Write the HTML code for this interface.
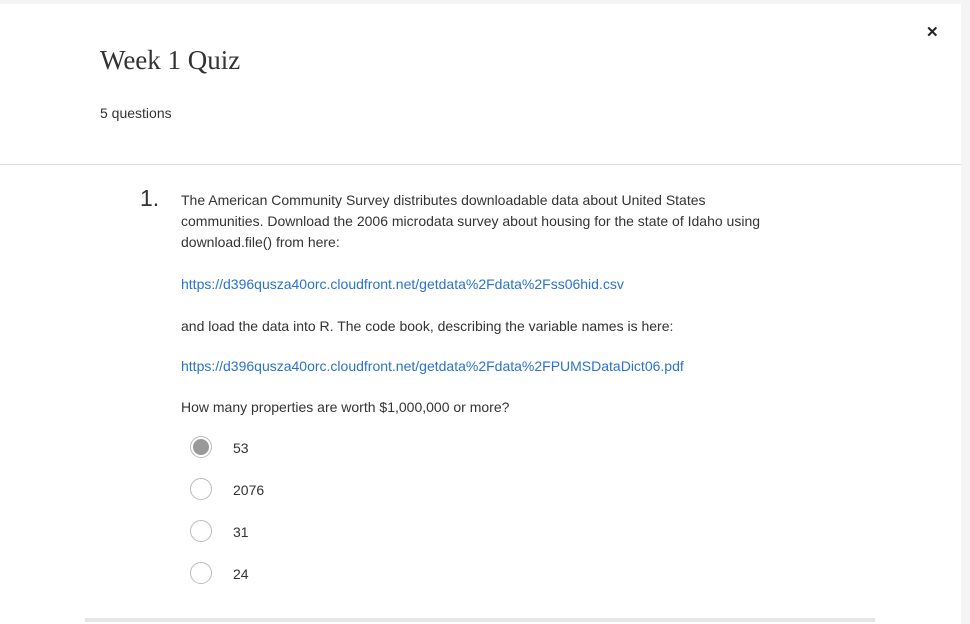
<!DOCTYPE html>
<html><head><meta charset="utf-8"><style>
body{margin:0;width:970px;height:624px;background:#f4f4f4;font-family:"Liberation Sans",sans-serif;overflow:hidden;position:relative}
.panel{position:absolute;left:0;top:4px;width:961px;height:620px;background:#fff}
.title{position:absolute;left:100px;top:41px;font-family:"Liberation Serif",serif;font-size:27px;color:#333}
.sub{position:absolute;left:100px;top:101px;font-size:14px;color:#333}
.close{position:absolute;left:926px;top:19px;font-size:15px;font-weight:bold;color:#222}
.hr{position:absolute;left:0;top:160px;width:961px;height:1px;background:#ddd}
.num{position:absolute;left:140px;top:181px;font-size:23px;color:#333}
.q{position:absolute;left:181px;width:700px;font-size:14px;color:#333;line-height:21px;white-space:nowrap}
a{color:#2a73cc;text-decoration:none}
.r{position:absolute;left:190px;width:22px;height:22px;border-radius:50%;border:1px solid #bbb;box-sizing:border-box;background:#fff}
.r.s::after{content:"";position:absolute;left:2px;top:2px;width:16px;height:16px;border-radius:50%;background:#999}
.o{position:absolute;left:233px;font-size:14px;color:#333}
.bot{position:absolute;left:85px;top:618px;width:790px;height:4px;background:#e6e6e6}
</style></head><body>
<div class="panel">
<div class="title">Week 1 Quiz</div>
<div class="sub">5 questions</div>
<div class="close">✕</div>
<div class="hr"></div>
<div class="num">1.</div>
<div class="q" style="top:186px">The American Community Survey distributes downloadable data about United States<br>communities. Download the 2006 microdata survey about housing for the state of Idaho using<br>download.file() from here:</div>
<div class="q" style="top:270px"><a>https://d396qusza40orc.cloudfront.net/getdata%2Fdata%2Fss06hid.csv</a></div>
<div class="q" style="top:312px">and load the data into R. The code book, describing the variable names is here:</div>
<div class="q" style="top:352px"><a>https://d396qusza40orc.cloudfront.net/getdata%2Fdata%2FPUMSDataDict06.pdf</a></div>
<div class="q" style="top:393px">How many properties are worth $1,000,000 or more?</div>
<div class="r s" style="top:432px"></div><div class="o" style="top:436px">53</div>
<div class="r" style="top:474px"></div><div class="o" style="top:478px">2076</div>
<div class="r" style="top:516px"></div><div class="o" style="top:520px">31</div>
<div class="r" style="top:558px"></div><div class="o" style="top:562px">24</div>
</div>
<div class="bot"></div>
</body></html>
